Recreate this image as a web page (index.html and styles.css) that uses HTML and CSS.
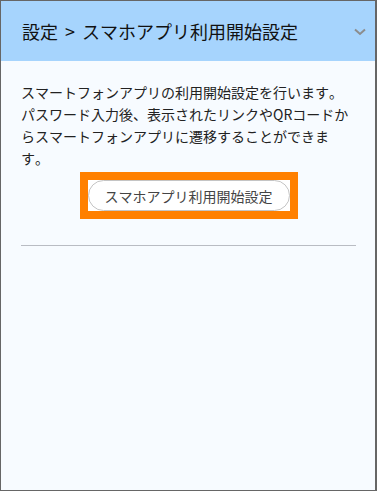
FILE: index.html
```html
<!DOCTYPE html>
<html lang="ja">
<head>
	<meta charset="UTF-8">
	<title>スマホアプリ利用開始設定</title>
	<link rel="stylesheet" href="styles.css">
</head>
<body>
	<div class="frame">
		<div class="head">
			<h1>設定 &gt; スマホアプリ利用開始設定</h1>
			<svg class="chev" width="12" height="8" viewBox="0 0 12 8"><path d="M1 1.5 L6 6 L11 1.5" fill="none" stroke="#8c8c8c" stroke-width="2"/></svg>
		</div>
		<div class="content">
			<p class="desc">スマートフォンアプリの利用開始設定を行います。パスワード入力後、表示されたリンクやQRコードからスマートフォンアプリに遷移することができます。</p>
			<div class="act">
				<span class="mark"><button class="btn">スマホアプリ利用開始設定</button></span>
			</div>
			<hr class="sep">
		</div>
	</div>
</body>
</html>
```

FILE: styles.css
```css
*{margin: 0;padding: 0;box-sizing: border-box;}
html,body{height: 100%;}
body{
	font-family: "Noto Sans CJK JP", "Noto Sans", sans-serif;
	font-kerning: none;
	font-feature-settings: "palt" 0, "kern" 0;
	background: #f7fbff;
	color: #222;
}
.frame{
	height: 491px;
	border: 1px solid #666;
	border-right-width: 2px;
	background: #f7fbff;
}
.head{
	height: 60px;
	background: #a6d4fd;
	display: flex;
	align-items: center;
	justify-content: space-between;
	padding: 0 9px 0 21px;
}
.head h1{
	font-size: 18px;
	font-weight: normal;
	color: #111;
	word-spacing: 3px;
}
.chev{margin-top: 2px;}
.content{
	padding: 20px 24px 0 20px;
}
.desc{
	font-size: 14px;
	line-height: 22px;
}
.act{
	display: flex;
	justify-content: center;
	margin: 3px -5px 0 0;
}
.mark{
	display: inline-block;
	border: 8px solid #ff8000;
	background: #fff;
}
.btn{
	display: block;
	width: 202px;
	height: 31px;
	border: 1px solid #c4c4c4;
	border-radius: 16px;
	background: #fff;
	font: 14px "Noto Sans CJK JP", sans-serif;
	font-kerning: none;
	color: #444;
}
.sep{
	margin: 26px -5px 0 0;
	border: 0;
	border-top: 1px solid #b9bcc3;
}
```
